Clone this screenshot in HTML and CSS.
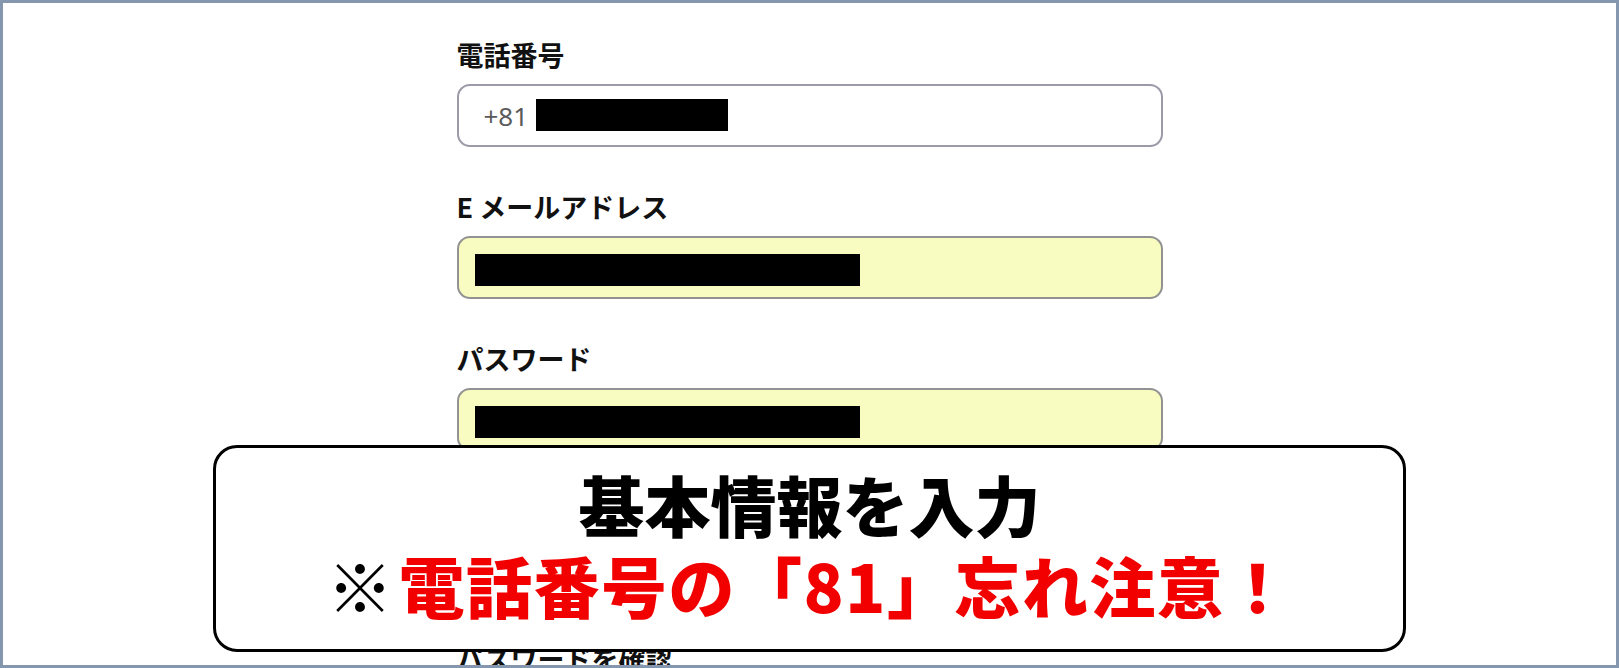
FILE: index.html
```html
<!DOCTYPE html>
<html lang="ja">
<head>
<meta charset="utf-8">
<title>基本情報を入力</title>
<link rel="stylesheet" href="styles.css">
</head>
<body>
<div class="frame">
  <form class="form">
    <div class="field">
      <label class="label">電話番号</label>
      <div class="input input-plain">
        <span class="prefix">+81</span>
        <span class="redact redact-short"></span>
      </div>
    </div>
    <div class="field">
      <label class="label">E メールアドレス</label>
      <div class="input input-filled">
        <span class="redact redact-long"></span>
      </div>
    </div>
    <div class="field field-password">
      <label class="label">パスワード</label>
      <div class="input input-filled">
        <span class="redact redact-long"></span>
      </div>
    </div>
    <div class="field">
      <label class="label">パスワードを確認</label>
      <div class="input input-plain"></div>
    </div>
  </form>
  <div class="callout">
    <p class="callout-line">基本情報を入力</p>
    <p class="callout-line callout-warn"><span class="mark">※</span><span class="warn">電話番号の「81」忘れ注意！</span></p>
  </div>
</div>
</body>
</html>
```
FILE: styles.css
```css
html, body {
  margin: 0;
  padding: 0;
  background: #ffffff;
}

.frame {
  position: relative;
  width: 1619px;
  height: 668px;
  box-sizing: border-box;
  border: 3px solid #8497ae;
  background: #ffffff;
  overflow: hidden;
  font-family: "Noto Sans CJK JP", "Noto Sans", sans-serif;
}

.form {
  width: 706px;
  margin: 0 auto;
  padding-top: 34px;
  display: flex;
  flex-direction: column;
}

.field {
  display: flex;
  flex-direction: column;
  margin-bottom: 42px;
}

.field-password {
  margin-bottom: 190px;
}

.label {
  font-size: 27px;
  font-weight: 700;
  line-height: 36px;
  color: #111111;
  margin-bottom: 11px;
}

.input {
  height: 63px;
  box-sizing: border-box;
  border: 2px solid #9a9aa8;
  border-radius: 13px;
  display: flex;
  align-items: center;
}

.input-plain {
  background: #ffffff;
  padding-left: 25px;
}

.input-filled {
  background: #f9fcc0;
  border-color: #929292;
  padding-left: 16px;
  padding-top: 4px;
}

.prefix {
  font-family: "Noto Sans", "Noto Sans CJK JP", sans-serif;
  font-size: 26px;
  font-weight: 400;
  color: #5a5a5a;
  margin-right: 8px;
}

.redact {
  display: block;
  height: 32px;
  background: #000000;
}

.redact-short {
  width: 192px;
  margin-top: -2px;
}

.redact-long {
  width: 385px;
}

.callout {
  position: absolute;
  left: 210px;
  top: 442px;
  width: 1193px;
  height: 207px;
  box-sizing: border-box;
  border: 3px solid #000000;
  border-radius: 24px;
  background: #ffffff;
  padding-bottom: 10px;
  display: flex;
  flex-direction: column;
  align-items: center;
  justify-content: center;
}

.callout-line {
  margin: 0;
  font-size: 66px;
  font-weight: 900;
  line-height: 81px;
  color: #000000;
  white-space: nowrap;
}

.callout-warn {
  letter-spacing: 1.5px;
}

.mark {
  font-weight: 400;
  color: #000000;
  margin-right: 4px;
}

.warn {
  color: #f20000;
}
```
